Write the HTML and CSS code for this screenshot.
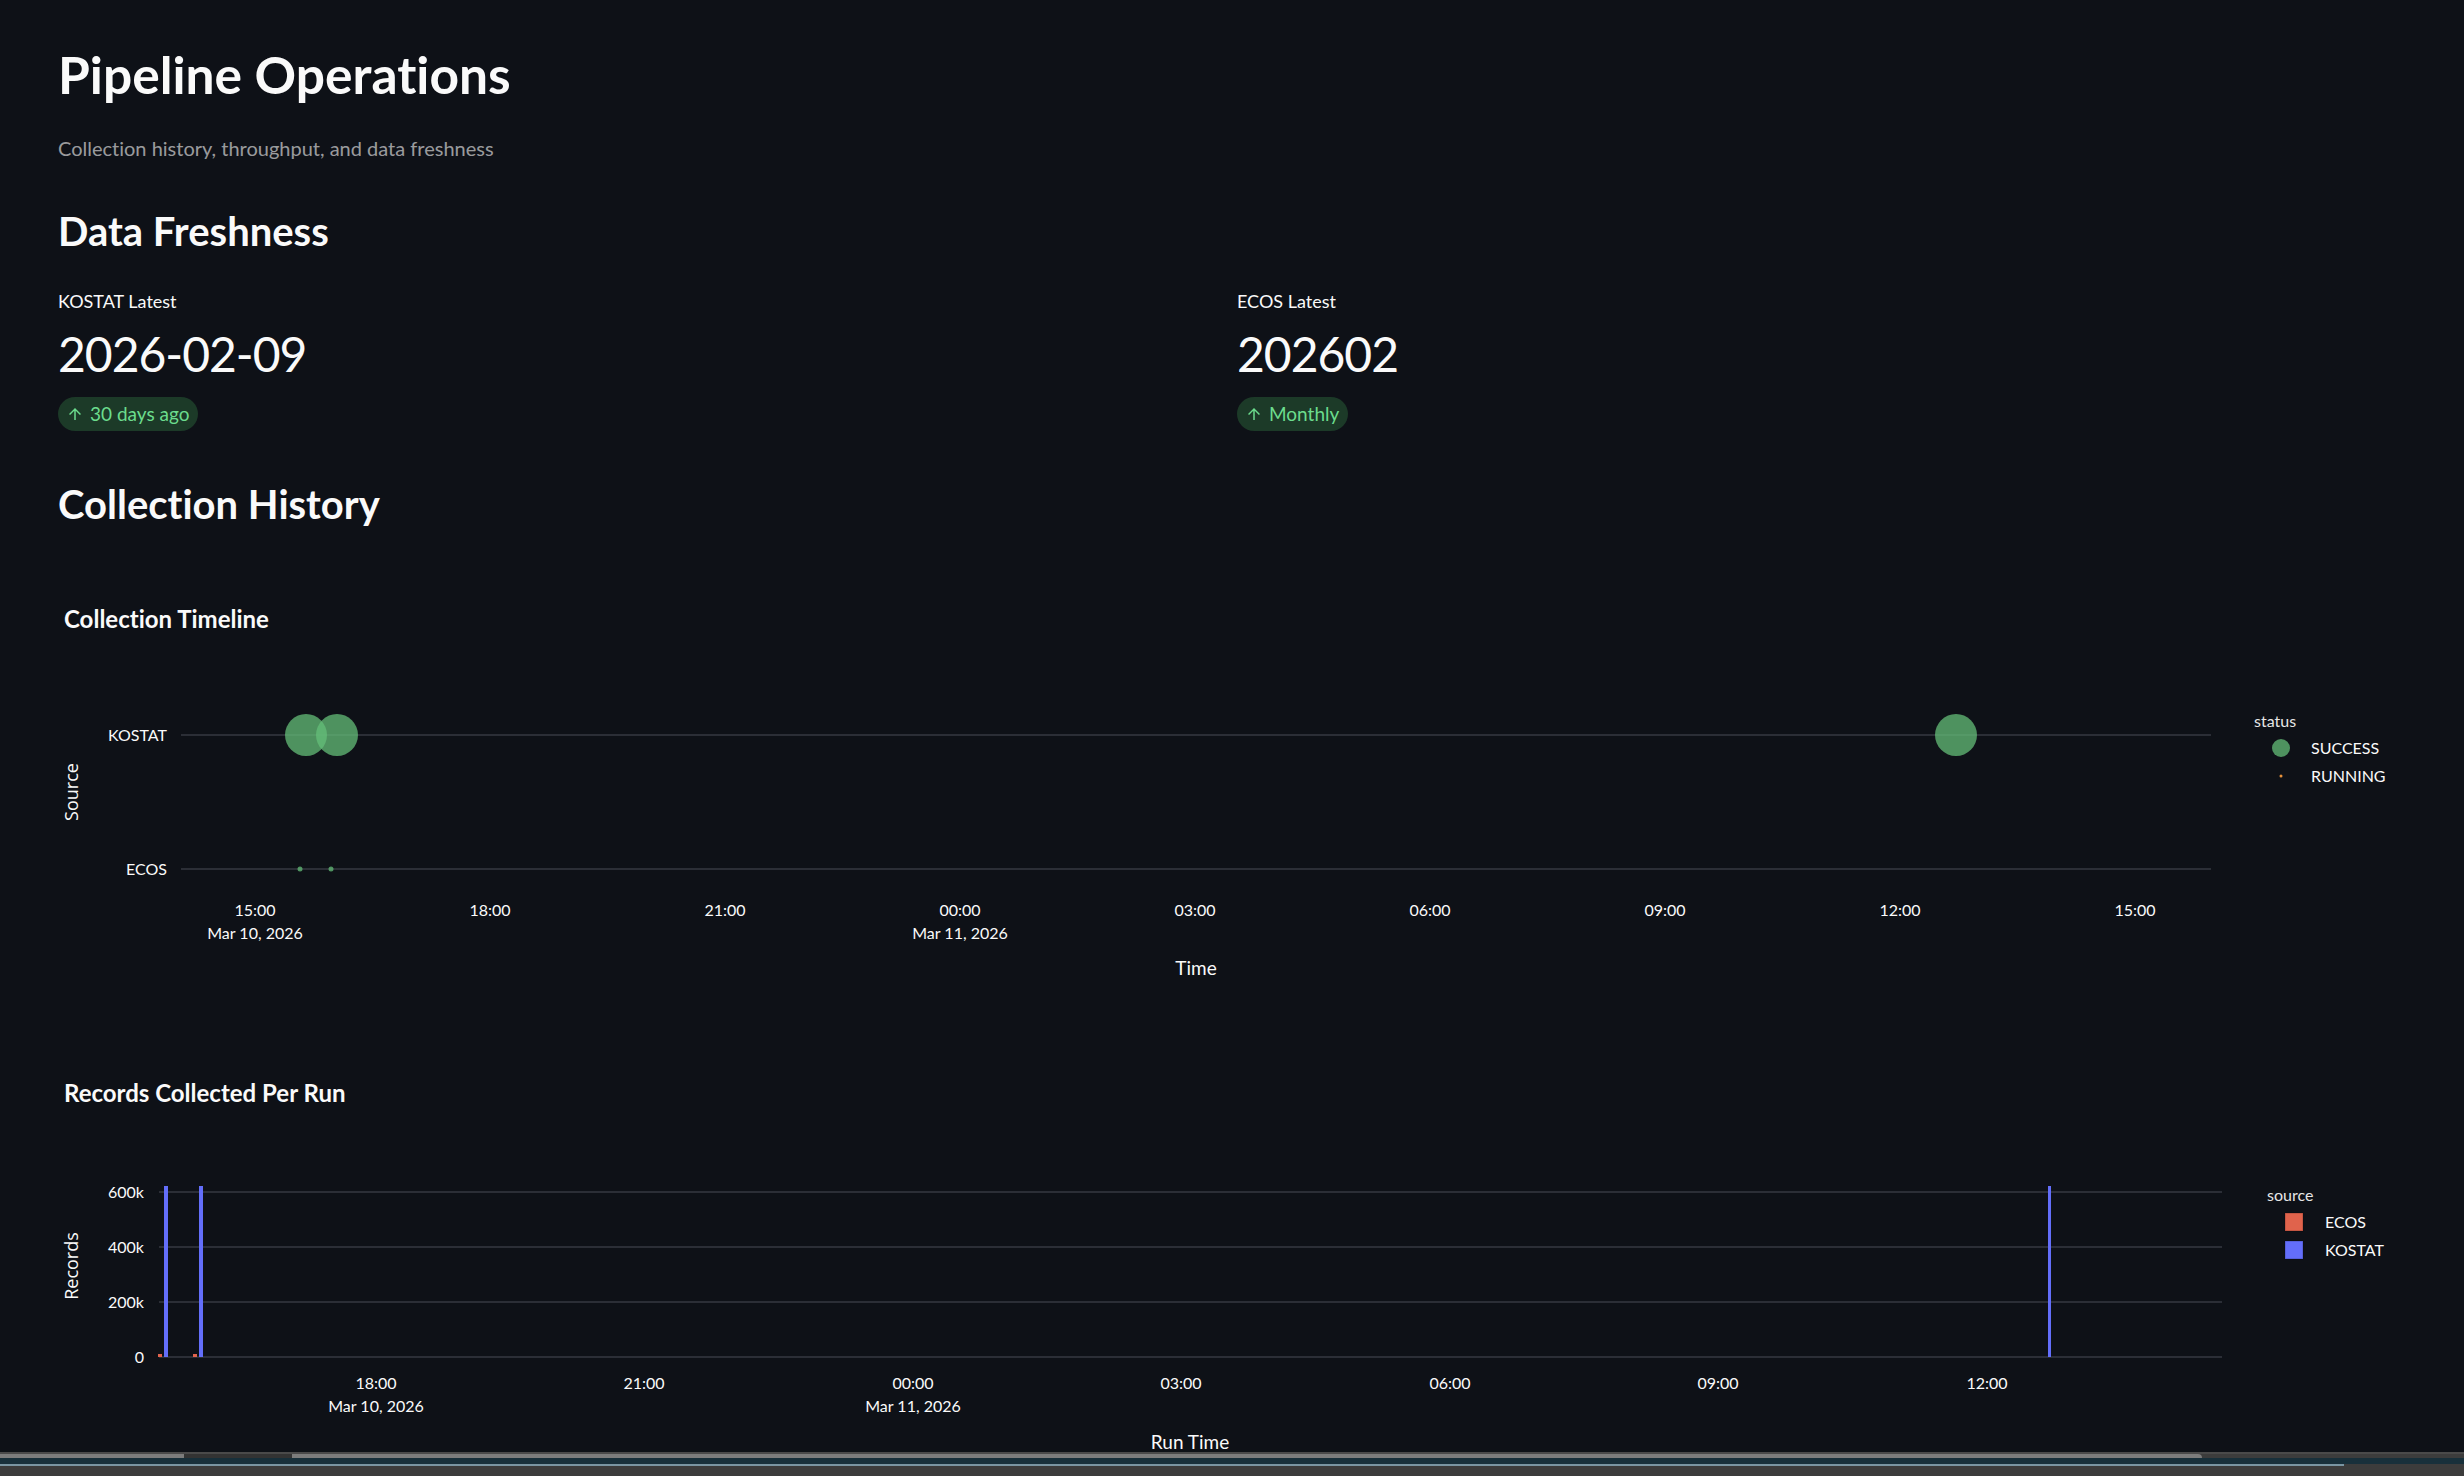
FILE: index.html
```html
<!DOCTYPE html>
<html lang="en">
<head>
  <meta charset="UTF-8">
  <title>Pipeline Operations</title>
  <link rel="stylesheet" href="styles.css">
</head>
<body>

<div class="app">
  <main class="main">
    <h1 class="page-title">Pipeline Operations</h1>
    <p class="caption">Collection history, throughput, and data freshness</p>

    <h2 class="section-title">Data Freshness</h2>
    <div class="metrics">
      <div class="metric">
        <div class="metric-label">KOSTAT Latest</div>
        <div class="metric-value">2026-02-09</div>
        <span class="metric-delta">
          <svg class="delta-arrow" viewBox="0 0 24 24"><path d="M4 12l1.41 1.41L11 7.83V20h2V7.83l5.58 5.59L20 12l-8-8-8 8z"/></svg>
          30 days ago
        </span>
      </div>
      <div class="metric">
        <div class="metric-label">ECOS Latest</div>
        <div class="metric-value">202602</div>
        <span class="metric-delta">
          <svg class="delta-arrow" viewBox="0 0 24 24"><path d="M4 12l1.41 1.41L11 7.83V20h2V7.83l5.58 5.59L20 12l-8-8-8 8z"/></svg>
          Monthly
        </span>
      </div>
    </div>

    <h2 class="section-title history">Collection History</h2>

    <div class="chart chart-timeline">
      <div class="chart-title">Collection Timeline</div>
      <svg class="plot" width="2406" height="367" viewBox="0 0 2406 367">
        <g class="grid">
          <line x1="123" y1="102" x2="2153" y2="102"/>
          <line x1="123" y1="236" x2="2153" y2="236"/>
        </g>
        <text class="tick" x="109" y="108" text-anchor="end">KOSTAT</text>
        <text class="tick" x="109" y="242" text-anchor="end">ECOS</text>

        <g class="tick" text-anchor="middle">
          <text x="197" y="283">15:00</text>
          <text x="197" y="306">Mar 10, 2026</text>
          <text x="432" y="283">18:00</text>
          <text x="667" y="283">21:00</text>
          <text x="902" y="283">00:00</text>
          <text x="902" y="306">Mar 11, 2026</text>
          <text x="1137" y="283">03:00</text>
          <text x="1372" y="283">06:00</text>
          <text x="1607" y="283">09:00</text>
          <text x="1842" y="283">12:00</text>
          <text x="2077" y="283">15:00</text>
        </g>

        <text class="axis-title rotated" transform="translate(20,159) rotate(-90)" text-anchor="middle">Source</text>
        <text class="axis-title" x="1138" y="342" text-anchor="middle">Time</text>

        <g class="bubble">
          <circle cx="248" cy="102" r="21"/>
          <circle cx="279" cy="102" r="21"/>
          <circle cx="1898" cy="102" r="21"/>
          <circle cx="242" cy="236" r="2.5"/>
          <circle cx="273" cy="236" r="2.5"/>
        </g>

        <text class="legend-title" x="2196" y="94">status</text>
        <circle class="bubble" cx="2223" cy="115" r="9"/>
        <text class="legend-item" x="2253" y="121">SUCCESS</text>
        <circle class="running" cx="2223" cy="143" r="1.5"/>
        <text class="legend-item" x="2253" y="149">RUNNING</text>
      </svg>
    </div>

    <div class="chart chart-records">
      <div class="chart-title">Records Collected Per Run</div>
      <svg class="plot" width="2406" height="345" viewBox="0 0 2406 345">
        <g class="grid">
          <line x1="101" y1="85" x2="2164" y2="85"/>
          <line x1="101" y1="140" x2="2164" y2="140"/>
          <line x1="101" y1="195" x2="2164" y2="195"/>
          <line x1="101" y1="250" x2="2164" y2="250"/>
        </g>
        <g class="tick" text-anchor="end">
          <text x="86" y="91">600k</text>
          <text x="86" y="146">400k</text>
          <text x="86" y="201">200k</text>
          <text x="86" y="256">0</text>
        </g>

        <g class="bar-kostat">
          <rect x="106" y="79" width="4" height="171"/>
          <rect x="141" y="79" width="4" height="171"/>
          <rect x="1990" y="79" width="3" height="171"/>
        </g>
        <g class="bar-ecos">
          <rect x="100" y="247" width="4" height="3"/>
          <rect x="135" y="247" width="4" height="3"/>
        </g>

        <g class="tick" text-anchor="middle">
          <text x="318" y="282">18:00</text>
          <text x="318" y="305">Mar 10, 2026</text>
          <text x="586" y="282">21:00</text>
          <text x="855" y="282">00:00</text>
          <text x="855" y="305">Mar 11, 2026</text>
          <text x="1123" y="282">03:00</text>
          <text x="1392" y="282">06:00</text>
          <text x="1660" y="282">09:00</text>
          <text x="1929" y="282">12:00</text>
        </g>

        <text class="axis-title rotated" transform="translate(20,159) rotate(-90)" text-anchor="middle">Records</text>
        <text class="axis-title" x="1132" y="342" text-anchor="middle">Run Time</text>

        <text class="legend-title" x="2209" y="94">source</text>
        <rect class="swatch-ecos" x="2227" y="106" width="18" height="18"/>
        <text class="legend-item" x="2267" y="121">ECOS</text>
        <rect class="swatch-kostat" x="2227" y="134" width="18" height="18"/>
        <text class="legend-item" x="2267" y="149">KOSTAT</text>
      </svg>
    </div>
  </main>

  <div class="desk-edge">
    <div class="edge-shadow"></div>
    <div class="edge-bar"><span class="edge-tab"></span></div>
    <div class="edge-wall"></div>
    <div class="edge-frame"></div>
  </div>
</div>

</body>
</html>
```

FILE: styles.css
```css
* { box-sizing: border-box; }
body {
  margin: 0;
  background-color: #0e1117;
  color: #fafafa;
  font-family: Lato, "Noto Sans", sans-serif;
  font-variant-ligatures: no-common-ligatures;
}
.app {
  height: 100vh;
  display: flex;
  flex-direction: column;
  overflow: hidden;
}
.main {
  flex: 1;
  padding: 0 58px;
}
.page-title {
  margin: 44px 0 0;
  font-size: 51.5px;
  line-height: 61px;
  font-weight: 700;
}
.caption {
  margin: 31px 0 0;
  font-size: 20px;
  line-height: 24px;
  color: rgba(250, 250, 250, 0.6);
}
.section-title {
  margin: 47px 0 0;
  font-size: 40px;
  line-height: 48px;
  font-weight: 700;
}
.section-title.history {
  margin-top: 49px;
}
.metrics {
  margin-top: 35px;
  display: grid;
  grid-template-columns: 1fr 1fr;
  column-gap: 10px;
}
.metric {
  display: flex;
  flex-direction: column;
  align-items: flex-start;
}
.metric-label {
  font-size: 18px;
  line-height: 22px;
}
.metric-value {
  margin-top: 12px;
  font-size: 48px;
  line-height: 60px;
  letter-spacing: -1px;
}
.metric-delta {
  margin-top: 13px;
  height: 34px;
  display: inline-flex;
  align-items: center;
  gap: 6px;
  padding: 0 9px 0 8px;
  border-radius: 17px;
  background-color: #1c3a28;
  color: #6bdc8d;
  font-size: 19px;
  line-height: 24px;
}
.delta-arrow {
  width: 18px;
  height: 18px;
  fill: #6bdc8d;
}
.chart {
  margin-top: 76px;
}
.chart-records {
  margin-top: 78px;
}
.chart-title {
  padding-left: 6px;
  font-size: 24px;
  line-height: 29px;
  font-weight: 700;
}
.plot {
  display: block;
  overflow: visible;
  font-family: Lato, "Noto Sans", sans-serif;
}
.grid line {
  stroke: #2b2e36;
  stroke-width: 2;
}
.tick {
  fill: #fafafa;
  font-size: 16px;
}
.axis-title {
  fill: #fafafa;
  font-size: 19px;
}
.axis-title.rotated {
  font-family: "Open Sans", Lato, sans-serif;
  font-size: 18px;
}
.bubble {
  fill: #64be78;
  fill-opacity: 0.75;
}
.running {
  fill: #e8913a;
}
.legend-title {
  fill: #e6e6e6;
  font-size: 16px;
}
.legend-item {
  fill: #fafafa;
  font-size: 16px;
}
.bar-kostat rect,
.swatch-kostat {
  fill: #636efa;
}
.bar-ecos rect,
.swatch-ecos {
  fill: #e0634c;
}
.swatch-kostat,
.swatch-ecos {
  stroke: rgba(0, 0, 0, 0.25);
  stroke-width: 1;
}
.desk-edge {
  height: 24px;
  background-color: #3c3c3c;
}
.edge-shadow {
  height: 2px;
  background-color: #4a4a4a;
}
.edge-bar {
  height: 4px;
  margin-right: 262px;
  background-color: #7c7c7c;
  border-top-right-radius: 4px;
}
.edge-tab {
  display: block;
  width: 108px;
  height: 4px;
  margin-left: 184px;
  background-color: #333;
}
.edge-wall {
  height: 6px;
  background-color: #18303b;
}
.edge-frame {
  height: 2px;
  margin-right: 120px;
  background-color: #7a95a2;
}
```
